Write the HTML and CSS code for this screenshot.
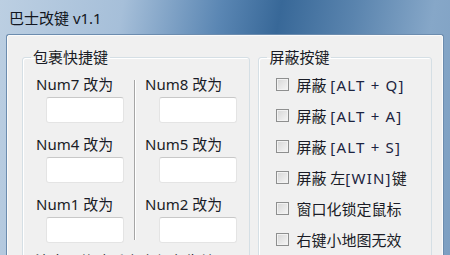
FILE: index.html
```html
<!DOCTYPE html>
<html lang="zh-cn">
<head>
    <meta charset="UTF-8">
    <meta name="viewport" content="width=device-width, initial-scale=1.0">
    <title>巴士改键 v1.1</title>
    <link rel="stylesheet" href="styles.css">
</head>
<body>

<div class="window">
    <div class="titlebar">巴士改键 v1.1</div>

    <div class="client">
        <!-- 左边：包裹快捷键 -->
        <fieldset class="group keys">
            <legend>包裹快捷键</legend>
            <div class="keys-body">
                <div class="col">
                    <div class="field"><span class="label">Num7 改为</span><span class="input"></span></div>
                    <div class="field"><span class="label">Num4 改为</span><span class="input"></span></div>
                    <div class="field"><span class="label">Num1 改为</span><span class="input"></span></div>
                </div>
                <div class="sep"></div>
                <div class="col col-right">
                    <div class="field"><span class="label">Num8 改为</span><span class="input"></span></div>
                    <div class="field"><span class="label">Num5 改为</span><span class="input"></span></div>
                    <div class="field"><span class="label">Num2 改为</span><span class="input"></span></div>
                </div>
            </div>
            <div class="note">注意：修改后点击保存生效</div>
        </fieldset>

        <!-- 右边：屏蔽按键 -->
        <fieldset class="group block">
            <legend>屏蔽按键</legend>
            <label class="check"><span class="box"></span>屏蔽&nbsp;<span class="key">[ALT + Q]</span></label>
            <label class="check"><span class="box"></span>屏蔽&nbsp;<span class="key">[ALT + A]</span></label>
            <label class="check"><span class="box"></span>屏蔽&nbsp;<span class="key">[ALT + S]</span></label>
            <label class="check"><span class="box"></span>屏蔽 左<span class="key">[WIN]</span>键</label>
            <label class="check"><span class="box"></span>窗口化锁定鼠标</label>
            <label class="check"><span class="box"></span>右键小地图无效</label>
        </fieldset>
    </div>
</div>

</body>
</html>
```

FILE: styles.css
```css
html, body {
    margin: 0;
    height: 100%;
    overflow: hidden;
}

body {
    font-family: "Noto Sans", "Noto Sans CJK SC", sans-serif;
    font-size: 15px;
    line-height: 18px;
    color: #1a1c26;
}

.window {
    height: 100%;
    padding: 0 7px;
    background: linear-gradient(100deg, #bccfe2 0%, #a6bfd9 25%, #5a86b3 45%, #386898 57%, #5a84ae 72%, #86a7c8 88%, #7d9fc2 100%);
}

.titlebar {
    height: 35px;
    padding-left: 2px;
    line-height: 36px;
    color: #121620;
}

.client {
    display: flex;
    gap: 8px;
    height: 400px;
    padding: 0 10px 0 14px;
    background-color: #f0f0f0;
    border: 1px solid #fbfbfb;
    border-radius: 2px 2px 0 0;
    box-shadow: 0 0 0 1px #6c8cae;
}

.group {
    margin: 12px 0 0;
    padding: 0;
    border: 1px solid #d5dfe5;
    border-radius: 3px;
    box-shadow: inset 1px 1px 0 #fff;
}

.group legend {
    margin-left: 8px;
    padding: 0 2px;
}

.keys {
    width: 227px;
}

.block {
    width: 172px;
    padding-top: 3px;
}

.keys-body {
    display: flex;
    padding-top: 9px;
}

.col {
    width: 111px;
    padding-left: 13px;
    box-sizing: border-box;
}

.col-right {
    padding-left: 9px;
}

.field {
    height: 60px;
}

.label {
    display: block;
}

.input {
    display: block;
    width: 78px;
    height: 26px;
    margin: 4px 0 0 10px;
    box-sizing: border-box;
    background-color: #fff;
    border: 1px solid #e4e4e4;
    border-top-color: #c8c8c8;
    border-radius: 3px;
}

.col-right .input {
    margin-left: 14px;
}

.sep {
    width: 0;
    height: 160px;
    margin-top: 5px;
    border-left: 1px solid #a5a5a5;
    border-right: 1px solid #fff;
}

.note {
    padding: 0 0 0 12px;
    margin-top: -3px;
}

.check {
    display: flex;
    align-items: center;
    height: 31px;
    padding-left: 17px;
    white-space: pre;
}

.key {
    letter-spacing: 1.2px;
    color: #1c2440;
}

.box {
    width: 11px;
    height: 11px;
    margin-right: 7px;
    border: 1px solid #8e8f8f;
    background: linear-gradient(135deg, #d6d6d6, #f6f6f6);
    box-shadow: inset 0 0 0 1px #f2f2f2;
}
```
